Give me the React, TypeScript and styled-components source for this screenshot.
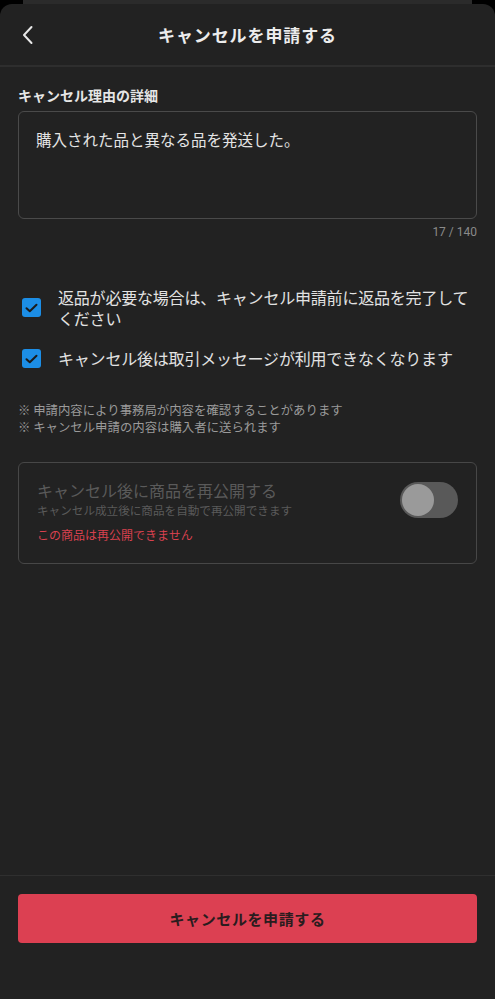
import React from "react";
import styled, { createGlobalStyle } from "styled-components";

const Global = createGlobalStyle`
  html, body { margin: 0; padding: 0; background: #000; }
  body { font-family: "Noto Sans CJK JP", "Noto Sans", sans-serif; -webkit-font-smoothing: antialiased; }
  * { box-sizing: border-box; }
`;

const Screen = styled.div`
  width: 495px;
  height: 999px;
  background: #000;
  display: flex;
  flex-direction: column;
  overflow: hidden;
`;

const BackSheet = styled.div`
  height: 4px;
  margin: 0 23px;
  background: #2b2b2b;
  flex-shrink: 0;
`;

const Sheet = styled.div`
  flex: 1;
  background: #222222;
  border-radius: 12px 12px 0 0;
  display: flex;
  flex-direction: column;
`;

const Header = styled.div`
  height: 63px;
  display: flex;
  align-items: center;
  justify-content: center;
  position: relative;
  border-bottom: 2px solid #2e2e2e;
  flex-shrink: 0;
`;

const BackButton = styled.button`
  position: absolute;
  left: 16px;
  top: 19px;
  width: 24px;
  height: 24px;
  padding: 0;
  border: none;
  background: transparent;
  display: flex;
  align-items: center;
  justify-content: center;
`;

const Title = styled.h1`
  margin: 0;
  font-size: 17px;
  font-weight: 700;
  color: #ececec;
  letter-spacing: 0.9px;
`;

const Content = styled.div`
  flex: 1;
  padding: 18px 18px 0;
  display: flex;
  flex-direction: column;
`;

const Label = styled.div`
  font-size: 14px;
  font-weight: 700;
  color: #e6e6e6;
  line-height: 20px;
  margin-bottom: 6px;
`;

const TextArea = styled.div`
  height: 108px;
  border: 1px solid #4a4a4a;
  border-radius: 6px;
  padding: 16px 17px;
  font-size: 15.5px;
  line-height: 22px;
  color: #e4e4e4;
`;

const Counter = styled.div`
  text-align: right;
  font-family: "Roboto", "Noto Sans", sans-serif;
  font-size: 12px;
  color: #8a8a8a;
  margin-top: 5px;
  line-height: 16px;
`;

const CheckList = styled.div`
  display: flex;
  flex-direction: column;
  gap: 19px;
  margin-top: 47px;
`;

const CheckRow = styled.div`
  display: flex;
  align-items: flex-start;
  gap: 17px;
  padding-left: 4px;
`;

const Box = styled.div<{ $offset: number }>`
  width: 19px;
  height: 19px;
  border-radius: 3px;
  background: #1c8ee6;
  flex-shrink: 0;
  margin-top: ${(p) => p.$offset}px;
  display: flex;
  align-items: center;
  justify-content: center;
`;

const CheckText = styled.div`
  font-size: 16px;
  line-height: 21px;
  color: #e2e2e2;
  letter-spacing: -0.2px;
`;

const Notes = styled.div`
  margin-top: 33px;
  font-size: 12.4px;
  line-height: 17px;
  color: #9a9a9a;
`;

const Card = styled.div`
  margin-top: 26px;
  height: 102px;
  border: 1px solid #474747;
  border-radius: 6px;
  padding: 17px 18px 0;
  display: flex;
  justify-content: space-between;
`;

const CardText = styled.div`
  display: flex;
  flex-direction: column;
`;

const CardTitle = styled.div`
  font-size: 16px;
  line-height: 20px;
  color: #5a5a5a;
`;

const CardSub = styled.div`
  margin-top: 3px;
  font-size: 11.6px;
  line-height: 15px;
  color: #5a5a5a;
`;

const CardError = styled.div`
  margin-top: 9px;
  font-size: 12px;
  line-height: 16px;
  color: #d9414f;
`;

const Toggle = styled.div`
  width: 58px;
  height: 36px;
  border-radius: 18px;
  background: #595959;
  margin-top: 2px;
  padding: 2px;
  flex-shrink: 0;
`;

const Knob = styled.div`
  width: 32px;
  height: 32px;
  border-radius: 50%;
  background: #9a9a9a;
`;

const Footer = styled.div`
  border-top: 1px solid #2f2f2f;
  padding: 18px 18px 56px;
  flex-shrink: 0;
`;

const SubmitButton = styled.button`
  width: 100%;
  height: 49px;
  border: none;
  border-radius: 4px;
  background: #dc4052;
  color: #2a1c1e;
  font-family: "Noto Sans CJK JP", "Noto Sans", sans-serif;
  font-size: 15px;
  font-weight: 700;
  letter-spacing: 0.6px;
`;

const Check = () => (
  <svg width="13" height="10" viewBox="0 0 13 10" fill="none">
    <path d="M1.5 5.2 L4.8 8.3 L11.5 1.7" stroke="#1b1b1b" strokeWidth="2" strokeLinecap="round" strokeLinejoin="round" />
  </svg>
);

export default function App() {
  return (
    <Screen>
      <Global />
      <BackSheet />
      <Sheet>
        <Header>
          <BackButton aria-label="戻る">
            <svg width="14" height="20" viewBox="0 0 14 20" fill="none">
              <path d="M10.5 2 L3 10 L10.5 18" stroke="#e8e8e8" strokeWidth="2" strokeLinecap="round" strokeLinejoin="round" />
            </svg>
          </BackButton>
          <Title>キャンセルを申請する</Title>
        </Header>
        <Content>
          <Label>キャンセル理由の詳細</Label>
          <TextArea>購入された品と異なる品を発送した。</TextArea>
          <Counter>17 / 140</Counter>
          <CheckList>
            <CheckRow>
              <Box $offset={11}>
                <Check />
              </Box>
              <CheckText>返品が必要な場合は、キャンセル申請前に返品を完了してください</CheckText>
            </CheckRow>
            <CheckRow>
              <Box $offset={1}>
                <Check />
              </Box>
              <CheckText>キャンセル後は取引メッセージが利用できなくなります</CheckText>
            </CheckRow>
          </CheckList>
          <Notes>
            <div>※ 申請内容により事務局が内容を確認することがあります</div>
            <div>※ キャンセル申請の内容は購入者に送られます</div>
          </Notes>
          <Card>
            <CardText>
              <CardTitle>キャンセル後に商品を再公開する</CardTitle>
              <CardSub>キャンセル成立後に商品を自動で再公開できます</CardSub>
              <CardError>この商品は再公開できません</CardError>
            </CardText>
            <Toggle>
              <Knob />
            </Toggle>
          </Card>
        </Content>
        <Footer>
          <SubmitButton>キャンセルを申請する</SubmitButton>
        </Footer>
      </Sheet>
    </Screen>
  );
}
